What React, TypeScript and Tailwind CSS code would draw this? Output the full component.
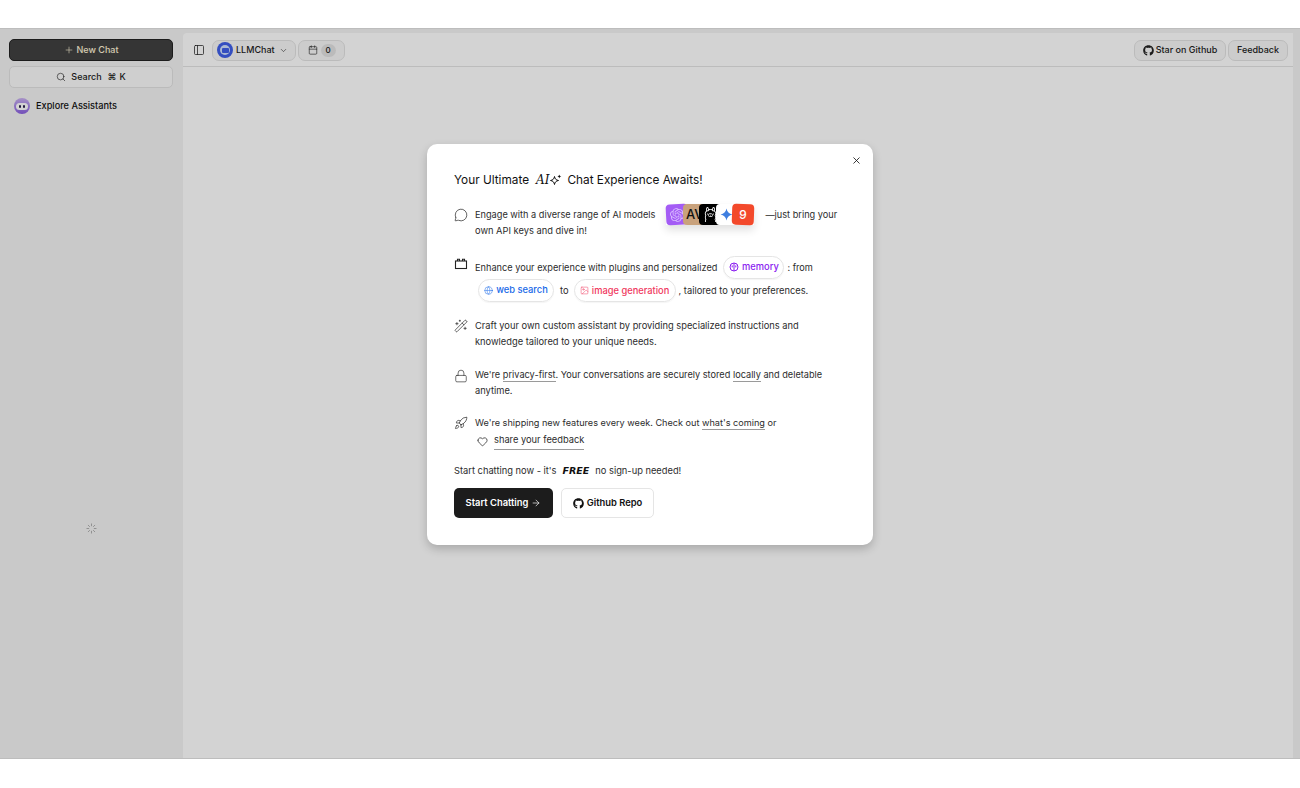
import { ReactNode } from "react"
import {
  ArrowRight,
  Calendar,
  ChevronDown,
  Globe,
  Heart,
  Image,
  Loader,
  Lock,
  MessageCircle,
  PanelLeft,
  Plus,
  Rocket,
  Search,
  WandSparkles,
  X,
} from "lucide-react"
import { FaGithub } from "react-icons/fa"
import { SiOllama, SiOpenai } from "react-icons/si"

function Pill({ children, className = "" }: { children: ReactNode; className?: string }) {
  return (
    <div className={`flex h-[21px] items-center justify-center whitespace-nowrap rounded-[7px] border border-[#e3e3e3] bg-[#f7f7f7] text-[9px] font-medium text-[#222] ${className}`}>
      {children}
    </div>
  )
}

function PluginIcon() {
  return (
    <svg width="14" height="14" viewBox="0 0 14 14" fill="none" stroke="#222" strokeWidth="1.1" className="mt-[1px]">
      <rect x="1.5" y="4" width="11" height="7.5" />
      <path d="M3.5 4V2.2h2V4M8.5 4V2.2h2V4" />
    </svg>
  )
}

function MemoryIcon() {
  return (
    <svg width="10" height="10" viewBox="0 0 10 10" fill="none" stroke="#8a1df0" strokeWidth="1">
      <circle cx="5" cy="5" r="4" />
      <path d="M5 1v8M3.2 3.4v2M6.8 3.4v2" />
    </svg>
  )
}

function SparkleIcon() {
  return (
    <svg width="13" height="13" viewBox="0 0 13 13" className="mr-[5px]">
      <path d="M5.5 2.5c.4 2.4 1.6 3.6 4 4-2.4.4-3.6 1.6-4 4-.4-2.4-1.6-3.6-4-4 2.4-.4 3.6-1.6 4-4z" fill="none" stroke="#111" strokeWidth="1" />
      <path d="M10.3.5c.2 1.2.8 1.8 2 2-1.2.2-1.8.8-2 2-.2-1.2-.8-1.8-2-2 1.2-.2 1.8-.8 2-2z" fill="#111" />
    </svg>
  )
}

function Tag({ children, className = "" }: { children: ReactNode; className?: string }) {
  return (
    <span className={`inline-flex h-[23px] items-center gap-[3px] whitespace-nowrap rounded-full border border-[#e5e5e5] text-[9.3px] font-medium shadow-[0_1px_1px_rgba(0,0,0,0.04)] ${className}`}>
      {children}
    </span>
  )
}

function Row({ icon, children, className = "" }: { icon: ReactNode; children: ReactNode; className?: string }) {
  return (
    <div className={`flex ${className}`}>
      <div className="w-[21px] shrink-0">{icon}</div>
      <div className="flex-1 whitespace-nowrap text-[#2c2c2c]">{children}</div>
    </div>
  )
}

function Line({ children }: { children: ReactNode }) {
  return <span className="border-b border-[#9a9a9a] pb-[1px]">{children}</span>
}

function ModelIcons() {
  return (
    <div className="-mt-[2px] ml-[11px] mr-[11px] flex shrink-0 text-[9.3px] shadow-[0_5px_8px_rgba(0,0,0,0.12)]">
      <div className="relative flex h-[21px] w-[22px] rotate-[-3deg] items-center justify-center rounded-[4px] bg-[#a45cf5]">
        <SiOpenai className="h-[14px] w-[14px] text-[#d9bcff]" />
      </div>
      <div className="relative -ml-[5.5px] flex h-[21px] w-[22px] items-center justify-start overflow-hidden rounded-[4px] bg-[#c9a27c] pl-[3px] text-[13px] font-medium text-[#111]">
        AV
      </div>
      <div className="relative -ml-[5.5px] flex h-[21px] w-[22px] items-center justify-center rounded-[4px] bg-black">
        <SiOllama className="h-[15px] w-[15px] text-white" />
      </div>
      <div className="relative -ml-[5.5px] flex h-[21px] w-[22px] items-center justify-center rounded-[4px] bg-white">
        <svg width="13" height="13" viewBox="0 0 24 24" fill="#3f7fe0">
          <path d="M12 1c1 6 5 10 11 11-6 1-10 5-11 11-1-6-5-10-11-11 6-1 10-5 11-11z" />
        </svg>
      </div>
      <div className="relative -ml-[5.5px] flex h-[21px] w-[22px] rotate-[2deg] items-center justify-center rounded-[4px] bg-[#f3492b] text-[12px] font-medium text-white">
        9
      </div>
    </div>
  )
}

function Sidebar() {
  return (
    <aside className="flex w-[183px] shrink-0 flex-col bg-[#f3f3f3] pl-[9px] pr-[10px] pt-[10px]">
      <div className="flex h-[22px] items-center justify-center gap-[3px] rounded-[5px] border border-[#222] bg-[#404040] text-[9px] font-medium text-[#fff5d8]">
        <Plus size={10} strokeWidth={1.5} />
        New Chat
      </div>
      <div className="mt-[5px] flex h-[22px] items-center justify-center gap-[5px] rounded-[5px] border border-[#e3e3e3] bg-[#fafafa] text-[9px] font-medium text-[#222]">
        <Search size={10} strokeWidth={1.5} />
        <span>Search</span>
        <span className="ml-[1px] flex items-center gap-[3px]">
          <span>⌘</span> K
        </span>
      </div>
      <div className="mt-[10px] flex items-center gap-[6px] pl-[5px] text-[9.2px] font-medium text-[#111]">
        <div className="flex h-[16px] w-[16px] items-center justify-center rounded-full bg-gradient-to-b from-[#c9b0ef] to-[#8b5fe0]">
          <div className="flex h-[7px] w-[12px] items-center justify-center gap-[2px] rounded-full bg-white">
            <span className="h-[3px] w-[2px] rounded-full bg-[#2b2350]" />
            <span className="h-[3px] w-[2px] rounded-full bg-[#2b2350]" />
          </div>
        </div>
        Explore Assistants
      </div>
      <div className="flex flex-1 items-center justify-center pt-[185px]">
        <Loader size={11} strokeWidth={1.2} className="text-[#777]" />
      </div>
    </aside>
  )
}

function Header() {
  return (
    <header className="flex h-[34px] items-center border-b border-[#e4e4e4] pl-[10px] pr-[5px] pt-[1px]">
      <PanelLeft size={12} strokeWidth={1.5} className="text-[#222]" />
      <Pill className="ml-[7px] w-[84px] justify-start gap-[3px] pl-[4px]">
        <div className="flex h-[16px] w-[16px] items-center justify-center rounded-full bg-[#3f5fe8]">
          <div className="flex h-[10px] w-[10px] items-center justify-center rounded-full bg-[#cfe0ff]">
            <div className="h-[5px] w-[7px] rounded-[1px] bg-[#3f5fe8]" />
          </div>
        </div>
        LLMChat
        <ChevronDown size={9} strokeWidth={1.5} className="ml-[1px]" />
      </Pill>
      <Pill className="ml-[2px] w-[47px] gap-[3px]">
        <Calendar size={10} strokeWidth={1.5} />
        <span className="flex h-[13px] w-[15px] items-center justify-center rounded-full bg-[#e3e3e3] text-[8px]">0</span>
      </Pill>
      <Pill className="ml-auto w-[92px] gap-[2px]">
        <FaGithub size={11} />
        Star on Github
      </Pill>
      <Pill className="ml-[2px] w-[60px]">Feedback</Pill>
    </header>
  )
}

function WelcomeModal() {
  return (
    <div className="relative h-[401px] w-[446px] rounded-[10px] bg-white px-[27px] pt-[27px] text-[9.3px] leading-[16px] shadow-[0_4px_10px_rgba(0,0,0,0.2)]">
      <X size={11} strokeWidth={1.8} className="absolute right-[11px] top-[11px] text-[#111]" />
      <div className="flex h-[18px] items-center whitespace-nowrap text-[11.8px] text-[#111]">
        Your Ultimate
        <span className="ml-[7px] font-['DejaVu_Serif',serif] text-[12px] italic">AI</span>
        <SparkleIcon />
        Chat Experience Awaits!
      </div>

      <Row className="mt-[18px]" icon={<MessageCircle size={14} strokeWidth={1.2} className="mt-[1px] text-[#222]" />}>
        <div className="flex h-[16px] items-center text-[9.2px]">
          Engage with a diverse range of AI models
          <ModelIcons />
          —just bring your
        </div>
        <div>own API keys and dive in!</div>
      </Row>

      <Row className="mt-[17px]" icon={<PluginIcon />}>
        <div className="flex h-[23px] items-center text-[9.2px]">
          Enhance your experience with plugins and personalized
          <Tag className="-mt-[1px] ml-[6px] w-[61px] justify-center text-[#8a1df0]">
            <MemoryIcon />
            memory
          </Tag>
          <span className="ml-[3px]">: from</span>
        </div>
        <div className="flex h-[23px] items-center pl-[3px]">
          <Tag className="-mt-[1px] w-[76px] justify-center text-[#1668e8]">
            <Globe size={9} strokeWidth={1.3} />
            web search
          </Tag>
          <span className="ml-[6px]">to</span>
          <Tag className="ml-[5px] w-[102px] justify-center text-[#f0385e]">
            <Image size={9} strokeWidth={1.3} />
            image generation
          </Tag>
          <span className="ml-[3px]">, tailored to your preferences.</span>
        </div>
      </Row>

      <Row className="mt-[16px]" icon={<WandSparkles size={14} strokeWidth={1.2} className="mt-[1px] text-[#222]" />}>
        <div>Craft your own custom assistant by providing specialized instructions and</div>
        <div>knowledge tailored to your unique needs.</div>
      </Row>

      <Row className="mt-[17px]" icon={<Lock size={14} strokeWidth={1.1} className="mt-[2px] text-[#222]" />}>
        <div className="text-[9.2px]">
          We're <Line>privacy-first</Line>. Your conversations are securely stored <Line>locally</Line> and deletable
        </div>
        <div>anytime.</div>
      </Row>

      <Row className="mt-[16px]" icon={<Rocket size={14} strokeWidth={1.2} className="mt-[1px] text-[#222]" />}>
        <div className="text-[9.15px]">
          We're shipping new features every week. Check out <Line>what's coming</Line> or
        </div>
        <div className="flex items-center pl-[2px] pt-[1px]">
          <Heart size={11} strokeWidth={1.5} className="mr-[6px] text-[#111]" />
          <Line>share your feedback</Line>
        </div>
      </Row>

      <div className="mt-[13px] flex h-[16px] items-center whitespace-nowrap text-[#2c2c2c]">
        Start chatting now - it's
        <span className="ml-[6px] mr-[6px] font-['DejaVu_Sans',sans-serif] text-[9.5px] font-bold italic text-[#111]">FREE</span>
        no sign-up needed!
      </div>

      <div className="mt-[9px] flex gap-[8px] text-[9.4px]">
        <div className="flex h-[30px] w-[99px] items-center justify-center gap-[3px] rounded-[5px] bg-[#1c1c1c] font-semibold text-white">
          Start Chatting
          <ArrowRight size={10} strokeWidth={1.6} />
        </div>
        <div className="flex h-[30px] w-[93px] items-center justify-center gap-[3px] rounded-[5px] border border-[#e5e5e5] font-semibold text-[#111]">
          <FaGithub size={11} />
          Github Repo
        </div>
      </div>
    </div>
  )
}

export default function App() {
  return (
    <div className="flex h-[788px] w-[1300px] flex-col overflow-hidden bg-white font-['Inter',sans-serif]">
      <div className="h-[28px] shrink-0" />
      <div className="relative flex h-[731px] shrink-0 border-y border-[#bdbdbd] bg-[#f3f3f3]">
        <Sidebar />
        <main className="mr-[7px] mt-[4px] flex-1 rounded-tl-[4px] bg-white">
          <Header />
        </main>
        <div className="absolute inset-0 flex justify-center bg-black/[0.173] pt-[115px]">
          <WelcomeModal />
        </div>
      </div>
    </div>
  )
}
